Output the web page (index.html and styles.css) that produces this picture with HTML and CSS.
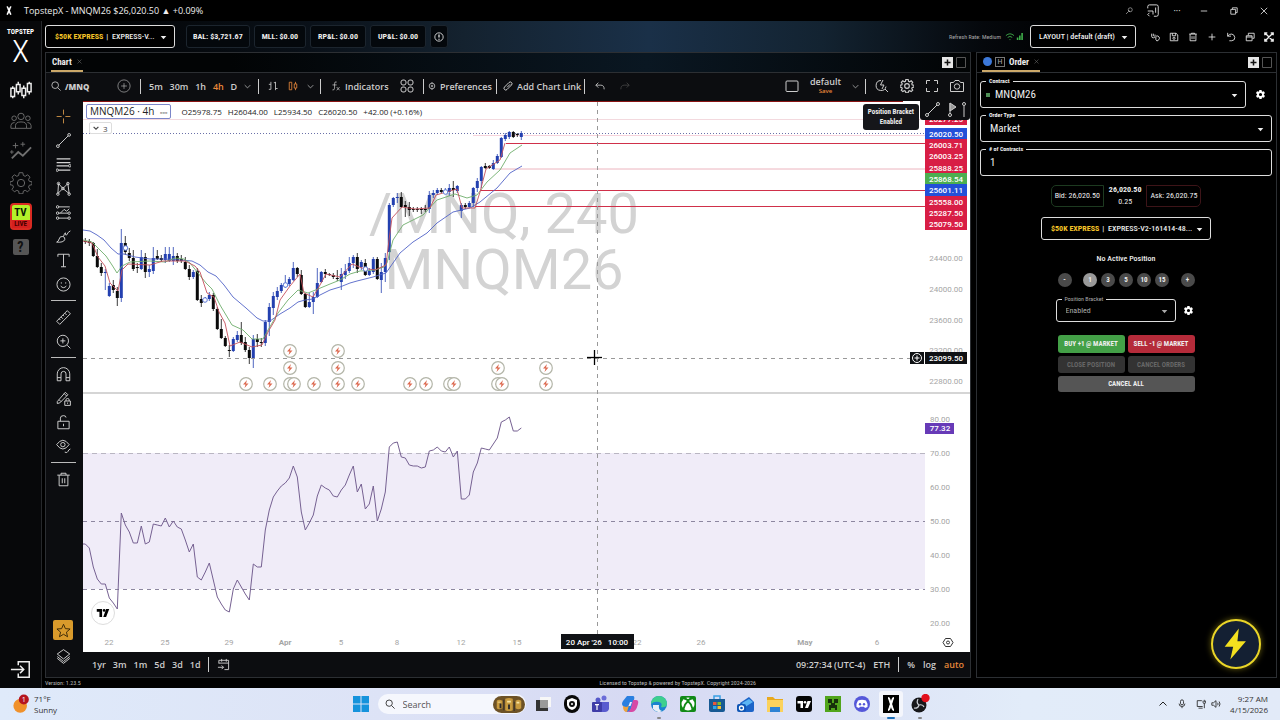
FILE: index.html
```
<!DOCTYPE html>
<html lang="en">
<head>
    <meta charset="UTF-8">
    <meta name="viewport" content="width=device-width, initial-scale=1">
    <title>TopstepX - MNQM26</title>
    <link rel="stylesheet" href="styles.css">
</head>
<body>

    <!-- shared icons -->
    <svg class="sprite" aria-hidden="true">
        <symbol id="i-gear" viewBox="0 0 24 24"><path d="M10 2h4l.6 3 2 .9L19.200 4.200l2.600 2.600-1.600 2.600.8 1.900 3 .7v3l-3 .7-.8 2 1.600 2.500-2.600 2.600-2.600-1.600-2 .8-.6 3h-4l-.6-3-2-.8-2.600 1.600-2.600-2.600 1.600-2.500-.8-2-3-.7v-3l3-.7.8-1.900L2.200 6.800l2.600-2.600 2.600 1.700 2-.9z" transform="translate(0 -1.200)"/><circle cx="12" cy="12" r="4"/></symbol>
        <symbol id="i-cog" viewBox="0 0 24 24"><path fill="currentColor" stroke="none" fill-rule="evenodd" d="M19.400 13a7.500 7.500 0 0 0 0-2l2.100-1.600a.5.5 0 0 0 .1-.7l-2-3.400a.5.5 0 0 0-.6-.2l-2.500 1a7.300 7.300 0 0 0-1.700-1l-.4-2.700a.5.5 0 0 0-.5-.4h-4a.5.5 0 0 0-.5.4L9 5.100a7.700 7.700 0 0 0-1.700 1l-2.500-1a.5.5 0 0 0-.6.200l-2 3.400a.5.5 0 0 0 .1.700L4.500 11a8 8 0 0 0 0 2l-2.100 1.600a.5.5 0 0 0-.1.700l2 3.400c.1.200.4.300.6.200l2.500-1a7.300 7.300 0 0 0 1.700 1l.4 2.700c0 .2.200.4.500.4h4c.2 0 .5-.2.5-.4l.4-2.700a7.700 7.700 0 0 0 1.700-1l2.500 1c.2.100.5 0 .6-.2l2-3.400a.5.5 0 0 0-.1-.7zM12 15.500a3.500 3.500 0 1 1 0-7 3.500 3.500 0 0 1 0 7z"/></symbol>
        <symbol id="i-caret" viewBox="0 0 10 10"><path fill="currentColor" stroke="none" d="M1 3h8L5 7.500z"/></symbol>
        <symbol id="i-chev" viewBox="0 0 10 10"><path d="M1 3l4 4 4-4"/></symbol>
        <symbol id="i-x" viewBox="0 0 10 10"><path d="M1 1l8 8M9 1L1 9"/></symbol>
        <symbol id="i-win" viewBox="0 0 24 11"><path fill="#e6e6e6" stroke="none" d="M0 0h11v11H0z"/><path stroke="#111" stroke-width="1.500" d="M5.500 2.500v6M2.500 5.500h6"/><path stroke="#555" d="M14.500.5h9v10h-9z"/></symbol>
        <symbol id="i-bolt" viewBox="0 0 24 24"><path fill="currentColor" stroke="none" d="M14 1L4 14h6l-2 9 11-13h-6z"/></symbol>
    </svg>

    <div class="titlebar">
        <svg class="app-icon" viewBox="0 0 8 12"><path fill="none" stroke="#fff" stroke-width="2" d="M1 1c2 0 1 2 3 5s1 5 3 5M7 1C5 1 6 3 4 6S3 11 1 11"/></svg>
        <span>TopstepX - MNQM26 $26,020.50 ▲ +0.09%</span>
        <div class="window-buttons">
            <button aria-label="Password"><svg viewBox="0 0 16 16"><circle cx="10.500" cy="5.500" r="4"/><path d="M7.500 8.500L2 14M7 6l3 4"/></svg></button>
            <button aria-label="Side panel"><svg class="big" viewBox="0 0 16 16"><path d="M2 5V3q0-2 2-2h8q2 0 2 2v9q0 2-2 2H9M11 4v6M2 8h6v4M4 14l-2-2 2-2"/></svg></button>
            <button aria-label="More">···</button>
            <button aria-label="Minimize"><svg viewBox="0 0 10 10"><path d="M1 5h8"/></svg></button>
            <button aria-label="Restore"><svg viewBox="0 0 10 10"><path d="M1 3h6v6H1zM3 3V1h6v6H7"/></svg></button>
            <button aria-label="Close"><svg viewBox="0 0 10 10"><use href="#i-x"/></svg></button>
        </div>
    </div>

    <div class="app">
        <nav class="side-nav">
            <div class="logo"><span>TOPSTEP</span><b>X</b></div>
            <a href="#" class="on" aria-label="Trading"><svg viewBox="0 0 24 24"><path stroke-width="1.600" d="M3 8v2m0 9v2M1 10h4v9H1zM9 3v3m0 8v3M7 6h4v8H7zM15 7v3m0 8v3M13 10h4v8h-4zM21 3v2m0 9v3M19 5h4v9h-4z"/></svg></a>
            <a href="#" aria-label="Leaderboard"><svg viewBox="0 0 24 24"><circle cx="12" cy="7" r="3.500"/><circle cx="4.500" cy="9" r="2.500"/><circle cx="19.500" cy="9" r="2.500"/><path d="M6 20v-3q0-4 6-4t6 4v3zM6 20H1v-3q0-3 4-3.500M18 20h5v-3q0-3-4-3.500"/></svg></a>
            <a href="#" aria-label="Insights"><svg viewBox="0 0 24 24"><path stroke-width="2" d="M2 19l7-7 5 4 9-9"/><path d="M6 2v6M3 5h6M14 1v5M11.500 3.500h5M2 10v4M0 12h4"/></svg></a>
            <a href="#" aria-label="Settings"><svg viewBox="0 0 24 24"><use href="#i-gear"/></svg></a>
            <a href="#" class="tv"><b>TV</b><i>LIVE</i></a>
            <a href="#" class="help">?</a>
            <a href="#" class="exit on" aria-label="Log out"><svg viewBox="0 0 24 24"><path stroke-width="1.600" d="M9 8V4h12v17H9v-4M1 12.500h14M11 8.500l4 4-4 4"/></svg></a>
        </nav>

        <div class="main">
            <header class="account-bar">
                <div class="select-box account">
                    <label for="account">$50K EXPRESS</label>
                    <select id="account"><option>|&nbsp; EXPRESS-V...</option></select>
                    <svg class="caret"><use href="#i-caret"/></svg>
                </div>
                <div class="stats">
                    <span class="stat">BAL: $3,721.67</span>
                    <span class="stat">MLL: $0.00</span>
                    <span class="stat">RP&amp;L: $0.00</span>
                    <span class="stat">UP&amp;L: $0.00</span>
                    <button class="stat info" aria-label="Info"><svg viewBox="0 0 12 12"><circle cx="6" cy="6" r="5"/><path stroke-width="1.500" d="M6 3v3.500M6 8v1.200"/></svg></button>
                </div>
                <div class="refresh">
                    <span>Refresh Rate: Medium</span>
                    <svg viewBox="0 0 20 10"><path d="M1 4q4.500-4 9 0M3 6q2.500-2.200 5 0M5.500 8v1"/><path stroke-width="1.800" d="M14 6v3M16.500 4v5M19 1v8"/></svg>
                </div>
                <div class="select-box layout">
                    <select aria-label="Layout"><option>LAYOUT | default (draft)</option></select>
                    <svg class="caret"><use href="#i-caret"/></svg>
                </div>
                <div class="layout-tools">
                    <button aria-label="Link"><svg viewBox="0 0 12 12"><path d="M2 2v3q0 2 2 2t2-2V3M4 2v3M7 5q3-1 4 1t-1 4-3-1V6"/></svg></button>
                    <button aria-label="Save"><svg viewBox="0 0 12 12"><path d="M1.500 1.500h7l2 2v7h-9zM4 1.500v3h4v-3"/><circle cx="6" cy="7.500" r="1.300"/></svg></button>
                    <button aria-label="Delete"><svg viewBox="0 0 12 12"><path d="M1.500 2.500h9M4 2.500v-1h4v1M2.500 2.500v8h7v-8M4.800 5v3.500M7.200 5v3.500"/></svg></button>
                    <button aria-label="Add"><svg viewBox="0 0 12 12"><path d="M6 2v8M2 6h8"/></svg></button>
                    <button aria-label="Reset"><svg viewBox="0 0 12 12"><path d="M2 1v4h4M2 5q2-3 5-2.500t3.500 4T7 10.500H4"/></svg></button>
                    <button aria-label="Windows"><svg viewBox="0 0 12 12"><path d="M1.500 4.500h7v6h-7zM1.500 6h7M4 4V1.500h7v6H9"/></svg></button>
                    <button aria-label="Full screen"><svg viewBox="0 0 12 12"><path stroke-width="1.600" d="M1.500 1.500l9 9M10.500 1.500l-9 9M1 4V1h3M8 1h3v3M11 8v3H8M4 11H1V8"/></svg></button>
                </div>
            </header>

            <div class="panels">
                <section class="panel chart-panel">
                    <div class="tabs">
                        <a href="#" class="tab">Chart <svg><use href="#i-x"/></svg></a>
                        <svg class="win"><use href="#i-win"/></svg>
                    </div>

                    <div class="toolbar">
                        <div class="group symbol">
                            <button><svg viewBox="0 0 12 12"><circle cx="5" cy="5" r="4"/><path d="M8 8l3.500 3.500"/></svg><b>/MNQ</b></button>
                            <button aria-label="Compare"><svg class="lg" viewBox="0 0 24 24"><circle cx="12" cy="12" r="10.500"/><path d="M12 7v10M7 12h10"/></svg></button>
                        </div>
                        <div class="group intervals">
                            <button>5m</button><button>30m</button><button>1h</button><button class="active">4h</button><button>D</button>
                            <button aria-label="More intervals"><svg class="chev"><use href="#i-chev"/></svg></button>
                        </div>
                        <div class="group types">
                            <button aria-label="Bars"><svg viewBox="0 0 12 12"><path d="M1 4h2.500M3.500 1v9M3.500 10H1M9 1v10M9 2H7M9 9h2.500"/></svg></button>
                            <button aria-label="Candles" class="active"><svg viewBox="0 0 12 12"><path d="M1.500 1.500h3v9h-3zM7.500 3.500h3v5h-3zM9 1v2.500M9 8.500V11"/></svg></button>
                            <button aria-label="More types"><svg class="chev"><use href="#i-chev"/></svg></button>
                        </div>
                        <div class="group indicators">
                            <button><svg viewBox="0 0 14 14"><path d="M8 1.500Q5 0 5 4v6q0 3-3 2.500M2 5.500h6M8 8.500l4 4.500M12 8.500L8 13"/></svg>Indicators</button>
                            <button aria-label="Templates"><svg class="lg" viewBox="0 0 14 14"><rect x="1" y="1" width="5" height="5" rx="2"/><rect x="8" y="1" width="5" height="5" rx="2"/><rect x="1" y="8" width="5" height="5" rx="2"/><rect x="8" y="8" width="5" height="5" rx="2"/></svg></button>
                        </div>
                        <div class="group prefs"><button><svg class="sm" viewBox="0 0 10 10"><circle cx="5" cy="5" r="3.500"/><circle cx="5" cy="5" r="1"/><path d="M5 0v1.500M5 8.500V10"/></svg>Preferences</button></div>
                        <div class="group link"><button><svg viewBox="0 0 12 12"><path stroke-width="1.200" d="M5 7.500L8.500 4M4.500 4.500L1.800 7.200a2 2 0 0 0 3 3L7.500 7.500M7.500 7.500l2.700-2.700a2 2 0 0 0-3-3L4.500 4.500"/></svg>Add Chart Link</button></div>
                        <div class="group history">
                            <button aria-label="Undo"><svg viewBox="0 0 12 12"><path d="M4 2L1 5l3 3M1 5h6q4 0 4 5"/></svg></button>
                            <button aria-label="Redo" disabled><svg viewBox="0 0 12 12"><path d="M8 2l3 3-3 3M11 5H5q-4 0-4 5"/></svg></button>
                        </div>
                        <div class="chart-layout">
                            <button aria-label="Layout"><svg class="lg" viewBox="0 0 14 14"><rect x="1" y="2" width="12" height="10.500" rx="1"/></svg></button>
                            <button class="saved">default<small>Save</small></button>
                            <button aria-label="Layouts"><svg class="chev"><use href="#i-chev"/></svg></button>
                        </div>
                        <div class="group view">
                            <button aria-label="Quick search"><svg class="lg" viewBox="0 0 14 14"><path d="M6 1.500a5 5 0 1 0 5 6M10 10l3 3M8 1L5.500 6H9l-2 4"/></svg></button>
                            <button aria-label="Chart settings"><svg class="lg gear" viewBox="0 0 24 24"><use href="#i-gear"/></svg></button>
                            <button aria-label="Full screen"><svg class="lg" viewBox="0 0 14 14"><path d="M1.500 5V1.500H5M9 1.500h3.500V5M12.500 9v3.500H9M5 12.500H1.500V9"/></svg></button>
                            <button aria-label="Snapshot"><svg class="lg" viewBox="0 0 14 14"><path d="M.5 3.500h3l1.500-2h4l1.500 2h3v9H.5z"/><circle cx="7" cy="7.500" r="2.700"/></svg></button>
                        </div>
                    </div>

                    <div class="chart-body">
                        <div class="draw-tools">
                            <button class="active" aria-label="Cross"><svg viewBox="0 0 24 24"><path d="M12 1v8M12 15v8M1 12h8M15 12h8"/></svg></button>
                            <button aria-label="Trend line"><svg viewBox="0 0 24 24"><circle cx="3" cy="21" r="2.200"/><circle cx="21" cy="3" r="2.200"/><path d="M4.500 19.500l15-15"/></svg></button>
                            <button aria-label="Fib"><svg viewBox="0 0 24 24"><path stroke-width="2" d="M1 3h22M1 9h22M1 14h19M4 21h19"/><circle cx="22" cy="14" r="2"/><circle cx="2" cy="21" r="2"/></svg></button>
                            <button aria-label="Patterns"><svg viewBox="0 0 24 24"><path d="M4 4l-1 16 8-8 8-8 2 16-10-8z"/><circle cx="4" cy="4" r="2"/><circle cx="19" cy="4" r="2"/><circle cx="3" cy="21" r="2"/><circle cx="21" cy="21" r="2"/><circle cx="11" cy="12" r="2"/></svg></button>
                            <button aria-label="Forecast"><svg viewBox="0 0 24 24"><path d="M4 3h18M4 13h15M4 21h15M7 13l6-6 4 3 4-4"/><circle cx="2.500" cy="3" r="2"/><circle cx="2.500" cy="13" r="2"/><circle cx="21" cy="13" r="2"/><circle cx="2.500" cy="21" r="2"/><circle cx="21" cy="21" r="2"/></svg></button>
                            <button aria-label="Brush"><svg viewBox="0 0 24 24"><path d="M1 21q3-1 4-5 1-5 6-4 4 1 3 5-2 5-13 4zM12 12q1-4 3-6v3q2 2 3-1t5-5"/></svg></button>
                            <button aria-label="Text"><svg viewBox="0 0 24 24"><path d="M3 6V2h18v4M12 2v20M8 22h8"/></svg></button>
                            <button aria-label="Emoji"><svg viewBox="0 0 24 24"><circle cx="12" cy="12" r="10.500"/><path d="M7.500 14.500q4.500 5 9 0M8.500 8.500v2M15.500 8.500v2"/></svg></button>
                            <hr>
                            <button aria-label="Measure"><svg viewBox="0 0 24 24"><path d="M1 18L18 1l5 5L6 23zM5 14l2 2M8 11l3 3M11 8l2 2M14 5l3 3"/></svg></button>
                            <button aria-label="Zoom in"><svg viewBox="0 0 24 24"><circle cx="11" cy="11" r="9"/><path d="M11 7v8M7 11h8M18 18l5 5"/></svg></button>
                            <hr>
                            <button aria-label="Magnet"><svg viewBox="0 0 24 24"><path d="M2 22V11a10 10 0 0 1 20 0v11h-6V11a4 4 0 0 0-8 0v11zM2 17h6M16 17h6"/></svg></button>
                            <button aria-label="Stay in drawing mode"><svg viewBox="0 0 24 24"><path d="M2 17L15 2l4 4L6 19l-4 1zM5 14l3 3M13 4l4 4M14 16h9v7h-9zM16 16v-2q0-2 2.500-2t2.500 2v2M18.500 18.500v2"/></svg></button>
                            <button aria-label="Lock"><svg viewBox="0 0 24 24"><path d="M3 10h18v12H3zM7 10V5q0-4 5-4 4 0 4 3M12 14v4"/></svg></button>
                            <button aria-label="Hide"><svg viewBox="0 0 24 24"><path d="M1 9q10-14 20 0-10 14-20 0z"/><circle cx="11" cy="9" r="3.500"/><path d="M14 21q4 2 5-1t4-4"/></svg></button>
                            <hr>
                            <button aria-label="Remove"><svg viewBox="0 0 24 24"><path d="M2 5h20M8 5V2h8v3M5 5v17h14V5M10 10v8M14 10v8"/></svg></button>
                            <button class="star" aria-label="Favorites"><svg viewBox="0 0 24 24"><path d="M12 2l3 7 7.500.6-5.800 5 1.800 7.400-6.500-4-6.500 4 1.800-7.400-5.800-5L9 9z"/></svg></button>
                            <button class="layers" aria-label="Object tree"><svg viewBox="0 0 24 24"><path d="M12 1l10 7-10 8L2 8zM2 12l10 8 10-8M2 15l10 8 10-8"/></svg></button>
                        </div>

                        <div class="chart-area">
                            <svg id="chart" viewBox="83 101 887 551" role="img" aria-label="MNQM26 4 hour chart with RSI"></svg>
                            <div class="legend">
                                <span class="legend-symbol">MNQM26 · 4h <i>▫▫▫</i></span>
                                <span class="ohlc"><span>O25978.75</span><span>H26044.00</span><span>L25934.50</span><span>C26020.50</span><span>+42.00 (+0.16%)</span></span>
                            </div>
                            <button class="collapse"><svg class="chev"><use href="#i-chev"/></svg>3</button>
                            <div class="favorites">
                                <svg viewBox="0 0 44 18"><circle cx="4" cy="14" r="1.500"/><circle cx="15" cy="3" r="1.500"/><path d="M5 13L14 4M27 2v11M41 5v11"/><path fill="#999" d="M27 2l6 4-6 4z"/><circle cx="27" cy="14" r="1.500"/><circle cx="41" cy="3" r="1.500"/></svg>
                            </div>
                            <div class="tooltip">Position Bracket<br><span>Enabled</span></div>
                            <span class="tv-mark"><svg viewBox="0 0 14 9"><path d="M0 0h6v9H3V3H0zM10.500 0H14l-3.500 9H7.300z"/><circle cx="8.300" cy="1.600" r="1.500"/></svg></span>
                        </div>

                        <div class="range-bar">
                            <button>1yr</button><button>3m</button><button>1m</button><button>5d</button><button>3d</button><button>1d</button>
                            <button class="goto" aria-label="Go to date"><svg viewBox="0 0 14 14"><path d="M2 6V2.500h10.500v10H8M2 5.500h10.500M5 1v3M10 1v3M1 10h6M5 8l2 2-2 2"/></svg></button>
                            <span class="clock">09:27:34 (UTC-4)</span>
                            <button>ETH</button>
                            <button class="percent">%</button>
                            <button>log</button>
                            <button class="active">auto</button>
                        </div>
                    </div>
                </section>

                <section class="panel order-panel">
                    <div class="tabs">
                        <a href="#" class="tab"><i class="dot"></i><i class="hbox">H</i>Order <svg><use href="#i-x"/></svg></a>
                        <svg class="win"><use href="#i-win"/></svg>
                    </div>
                    <form class="order-form">
                        <div class="row">
                            <div class="field">
                                <label for="contract">Contract</label>
                                <i class="status"></i>
                                <select id="contract"><option>MNQM26</option></select>
                                <svg class="caret"><use href="#i-caret"/></svg>
                            </div>
                            <button type="button" class="cog" aria-label="Contract settings"><svg><use href="#i-cog"/></svg></button>
                        </div>
                        <div class="field">
                            <label for="orderType">Order Type</label>
                            <select id="orderType"><option>Market</option></select>
                            <svg class="caret"><use href="#i-caret"/></svg>
                        </div>
                        <div class="field">
                            <label for="contracts"># of Contracts</label>
                            <input type="text" id="contracts" value="1">
                        </div>

                        <div class="quote">
                            <span class="bid">Bid: 26,020.50</span>
                            <span class="last"><b>26,020.50</b>0.25</span>
                            <span class="ask">Ask: 26,020.75</span>
                        </div>

                        <div class="select-box order-account">
                            <label for="orderAccount">$50K EXPRESS</label>
                            <select id="orderAccount"><option>|&nbsp; EXPRESS-V2-161414-48...</option></select>
                            <svg class="caret"><use href="#i-caret"/></svg>
                        </div>

                        <p class="position">No Active Position</p>
                        <div class="sizes">
                            <button type="button">-</button>
                            <div>
                                <button type="button" class="picked">1</button><button type="button">3</button><button type="button">5</button><button type="button">10</button><button type="button">15</button>
                            </div>
                            <button type="button">+</button>
                        </div>
                        <div class="row bracket">
                            <div class="field">
                                <label for="bracket">Position Bracket</label>
                                <select id="bracket"><option>Enabled</option></select>
                                <svg class="caret"><use href="#i-caret"/></svg>
                            </div>
                            <button type="button" class="cog" aria-label="Bracket settings"><svg><use href="#i-cog"/></svg></button>
                        </div>
                        <div class="actions">
                            <button type="button" class="buy">BUY +1 @ MARKET</button>
                            <button type="button" class="sell">SELL -1 @ MARKET</button>
                            <button type="button" disabled>CLOSE POSITION</button>
                            <button type="button" disabled>CANCEL ORDERS</button>
                            <button type="button" class="cancel-all">CANCEL ALL</button>
                        </div>
                    </form>
                    <button class="fab" aria-label="Quick actions"><svg viewBox="0 0 24 24"><use href="#i-bolt"/></svg></button>
                </section>
            </div>

            <footer class="app-footer">
                <span>Version: 1.23.5</span>
                <span>Licensed to Topstep &amp; powered by TopstepX. Copyright 2024-2026</span>
            </footer>
        </div>
    </div>

    <div class="taskbar">
        <div class="weather">
            <svg viewBox="0 0 22 22"><circle cx="9" cy="13" r="7.500" fill="#f0912a"/><circle cx="13" cy="6" r="5.500" fill="#b5151f"/><text x="13" y="9" fill="#fff" font-size="8" text-anchor="middle">1</text></svg>
            <span>71°F<br>Sunny</span>
        </div>
        <div class="apps">
            <a href="#" aria-label="Start"><svg viewBox="0 0 20 20"><path fill="#1593dc" d="M2 2h7.500v7.500H2zM10.500 2H18v7.500h-7.500zM2 10.500h7.500V18H2zM10.500 10.500H18V18h-7.500z"/></svg></a>
            <label class="search">
                <svg viewBox="0 0 12 12"><circle cx="5" cy="5" r="3.800"/><path d="M8 8l3.500 3.500"/></svg>
                <input type="text" placeholder="Search" aria-label="Search">
                <svg class="promo" viewBox="0 0 34 18"><rect width="34" height="18" rx="9" fill="#6d5226"/><path fill="#c79a3e" d="M4 5q2-2 6 0v8q-4 2-6 0zM13 3q4-2 8 0v12q-4 2-8 0zM24 5q3-2 6 0v8q-3 2-6 0z"/><path fill="#2e2b2a" d="M11 4h1v11h-1zM22 6h1v10h-1zM7 8h2v5H7zM16 9h2v5h-2z"/><path fill="#f6e3a0" d="M15 5h4v2h-4zM25 6h3v2h-3zM5 6h3v1H5z"/></svg>
            </label>
            <a href="#" aria-label="Task view"><svg viewBox="0 0 20 20"><path fill="#f7f7f7" d="M7 3h11v10H7z"/><path fill="#333" d="M3 6h4v8h8v3H3z"/><path fill="#9a9a9a" d="M7 6h8v8H7z"/></svg></a>
            <a href="#" aria-label="Security"><svg viewBox="0 0 20 20"><rect x="2" y="1" width="16" height="18" rx="8" fill="#090909"/><path fill="#fff" d="M10 4l5 2v5q-1 4-5 5-4-1-5-5V6z"/><circle cx="10" cy="10" r="3" fill="#111"/><circle cx="10" cy="10" r="1" fill="#fff"/></svg></a>
            <a href="#" aria-label="Teams"><svg viewBox="0 0 20 20"><circle cx="13" cy="4" r="2.500" fill="#6b6cd8"/><circle cx="7" cy="6" r="2.500" fill="#5558c9"/><path fill="#5a5ccf" d="M9 8h9v7q-1 3-4 3H9z"/><rect x="1" y="8" width="10" height="10" rx="1" fill="#3f3da8"/><path fill="#fff" d="M4 10h4v1.200H6.600V16H5.400v-4.800H4z"/></svg></a>
            <a href="#" aria-label="Copilot"><svg viewBox="0 0 20 20"><path fill="#2a7fe0" d="M7 2h6q2 0 1 4l-3 9q-1 3-4 3-3-1-2-4L3 12q-2-2 0-5z"/><path fill="#f0a23c" d="M3 12l3 1q2 0 3-2l-2 7q-4 0-4-6z"/><path fill="#d64aa5" d="M13 6h3q3 0 2 4-2 8-6 8H7q3-1 4-4z"/><path fill="#eef" d="M10 8h2l-1.500 4h-2z"/></svg></a>
            <a href="#" class="run" aria-label="Edge"><svg viewBox="0 0 20 20"><circle cx="10" cy="10" r="8" fill="#1b83cf"/><path fill="#3ecf8e" d="M10 2a8 8 0 0 1 8 8q-1 4-6 3 2-4-2-5-5-1-8 2 1-8 8-8z"/><path fill="#e8eef6" d="M4 11h6q-1 5 3 6-4 3-9-2z"/></svg></a>
            <a href="#" aria-label="Xbox"><svg viewBox="0 0 20 20"><rect x="2" y="2" width="16" height="16" rx="2" fill="#118a17"/><circle cx="10" cy="10" r="6.500" fill="#fff"/><path fill="none" stroke="#118a17" stroke-width="1.800" d="M5.500 15q1-5 4.500-8 3.500 3 4.500 8M6 4.500q2 0 4 2 2-2 4-2"/></svg></a>
            <a href="#" aria-label="Store"><svg viewBox="0 0 20 20"><path fill="#175a94" d="M2 5h16v11q0 2-2 2H4q-2 0-2-2z"/><path fill="none" stroke="#3aa0e4" stroke-width="1.500" d="M7 5V2h6v3"/><path fill="#e8573b" d="M6 8h3.500v3H6z"/><path fill="#7fba2c" d="M10.500 8H14v3h-3.500z"/><path fill="#2fa5e8" d="M6 12h3.500v3H6z"/><path fill="#f5c02d" d="M10.500 12H14v3h-3.500z"/></svg></a>
            <a href="#" aria-label="Outlook"><svg viewBox="0 0 20 20"><path fill="#1b64c8" d="M4 9l9-6 5 5v8q0 2-2 2H6z"/><path fill="#5bb5f4" d="M6 9l7-4 4 3-8 5z"/><rect x="1" y="10" width="9" height="8" rx="2" fill="#0f56b5"/><circle cx="5.500" cy="14" r="2" fill="none" stroke="#fff" stroke-width="1.300"/></svg></a>
            <a href="#" aria-label="Explorer"><svg viewBox="0 0 20 20"><path fill="#e8a91f" d="M2 3h6l2 2h8v5H2z"/><path fill="#fbd25c" d="M2 6h16v12H2z"/><path fill="#2d83d4" d="M5 13h10v5H5z"/></svg></a>
            <a href="#" aria-label="TradingView"><svg viewBox="0 0 20 20"><rect x="2" y="2" width="16" height="16" rx="3" fill="#050505"/><path fill="#fff" d="M3.500 7H9v7H6.500V9.500h-3zM13.500 7H17l-3 7h-3z"/><circle cx="11" cy="8.200" r="1.300" fill="#fff"/></svg></a>
            <a href="#" aria-label="Minecraft"><svg viewBox="0 0 20 20"><path fill="#51a51c" d="M2 2h16v16H2z"/><path fill="#17300b" d="M5 5h4v4H5zM11 5h4v4h-4zM8 9h4v2h2v5h-2v-2H8v2H6v-5h2z"/></svg></a>
            <a href="#" aria-label="Discord"><svg viewBox="0 0 20 20"><circle cx="10" cy="10" r="8" fill="#5558d9"/><path fill="#fff" d="M6 6.500q4-1.500 8 0 2 3 1.500 6.500l-2.500 1-1-1.200H8L7 14l-2.500-1Q4 9.500 6 6.500z"/><circle cx="8" cy="10.300" r="1.200" fill="#5558d9"/><circle cx="12" cy="10.300" r="1.200" fill="#5558d9"/></svg></a>
            <a href="#" class="current" aria-label="TopstepX"><svg viewBox="0 0 20 20"><path fill="#000" d="M2 1h16v18H2z"/><path fill="none" stroke="#fff" stroke-width="2" d="M7 4c2 0 1.500 3 3 6s1 6 3 6M13 4c-2 0-1.500 3-3 6s-1 6-3 6"/></svg></a>
            <a href="#" class="run" aria-label="OBS"><svg viewBox="0 0 20 20"><circle cx="9" cy="11" r="7.500" fill="#17171a"/><path fill="none" stroke="#c9ccd2" stroke-width="1.200" d="M9 11q-3-2-1-6M9 11q4-1 5 2M9 11q-1 4-5 3"/><circle cx="15.500" cy="4" r="4.200" fill="#e20f1c"/></svg></a>
        </div>
        <div class="tray">
            <svg viewBox="0 0 10 10"><path d="M1.500 6.500L5 3l3.500 3.500"/></svg>
            <svg class="mic" viewBox="0 0 12 12"><rect x="4.200" y="1" width="3.600" height="6" rx="1.800"/><path d="M2.500 5.500q0 3.500 3.500 3.500t3.500-3.500M6 9v2"/></svg>
            <svg viewBox="0 0 12 12"><path d="M7 2H1.500v7H8M3 11h5M10 1v3M8.500 2v2q0 1.500 1.500 1.500T11.500 4V2M10 5.500V11"/></svg>
            <svg viewBox="0 0 12 12"><path d="M1 4.500h2L6 2v8L3 7.500H1zM8 4.500q1 1.500 0 3M9.800 3q2 3 0 6"/></svg>
            <span>9:27 AM<br>4/15/2026</span>
        </div>
    </div>

    <script src="chart.js"></script>
</body>
</html>
```
FILE: styles.css
```
* {
    box-sizing: border-box;
}

body {
    margin: 0;
    height: 100vh;
    display: flex;
    flex-direction: column;
    background-color: #000;
    color: #eee;
    font-family: "Roboto Condensed", Roboto, sans-serif;
    font-size: 8px;
    overflow: hidden;
}

svg {
    display: block;
    fill: none;
    stroke: currentColor;
    flex: none;
}

button, select, input {
    font: inherit;
    color: inherit;
    background: none;
    border: none;
    padding: 0;
    margin: 0;
    appearance: none;
}

button {
    display: flex;
    align-items: center;
    justify-content: center;
    gap: 4px;
    white-space: nowrap;
    cursor: pointer;
}

a {
    color: inherit;
    text-decoration: none;
}

i {
    font-style: normal;
}

.sprite {
    position: absolute;
    width: 0;
    height: 0;
}

/* title bar */
.titlebar {
    display: flex;
    align-items: center;
    gap: 12px;
    height: 21px;
    padding: 0 1px 0 6px;
    font-family: "Open Sans", sans-serif;
    font-size: 9px;
}

.app-icon {
    width: 6px;
    height: 9px;
}

.window-buttons {
    display: flex;
    align-items: center;
    margin-left: auto;
}

.window-buttons button {
    width: 30px;
}

.window-buttons button:nth-child(-n+3) {
    width: 24px;
}

.window-buttons svg {
    width: 8px;
    height: 8px;
}

.window-buttons .big {
    width: 14px;
    height: 14px;
}

/* layout */
.app {
    flex: 1;
    display: flex;
    min-height: 0;
}

.side-nav {
    width: 42px;
    display: flex;
    flex-direction: column;
    align-items: center;
    gap: 9px;
    padding: 4px 0 8px;
    background-color: #07080a;
    border-right: 1px solid #26282b;
    color: #707070;
}

.side-nav svg {
    width: 22px;
    height: 22px;
}

.side-nav .on {
    color: #eee;
}

.logo {
    display: flex;
    flex-direction: column;
    align-items: center;
    height: 45px;
    color: #fff;
    font-size: 7px;
    font-weight: bold;
    line-height: 14px;
}

.logo b {
    font-size: 32px;
    font-weight: 300;
    line-height: 24px;
}

.tv {
    width: 22px;
    height: 27px;
    border: 2px solid #d92b22;
    border-radius: 4px;
    background-color: #b3f02a;
    color: #0b1a05;
    display: flex;
    flex-direction: column;
    justify-content: space-between;
    text-align: center;
    line-height: 15px;
    font-size: 11px;
}

.tv i {
    background-color: #d61f1f;
    color: #400;
    font-size: 7px;
    font-weight: bold;
    line-height: 8px;
}

.help {
    width: 16px;
    height: 16px;
    border-radius: 2px;
    background-color: #555;
    color: #111;
    font-size: 14px;
    font-weight: bold;
    line-height: 16px;
    text-align: center;
}

.exit {
    margin-top: auto;
}

.main {
    flex: 1;
    min-width: 0;
    display: flex;
    flex-direction: column;
}

.account-bar {
    display: flex;
    align-items: center;
    height: 31px;
    padding: 0 2px 0 3px;
    background: linear-gradient(90deg, #000 0%, #0a1119 22%, #14222f 34%, #1a3048 49%, #132331 63%, #05080c 76%, #000 84%);
}

.select-box {
    position: relative;
    display: flex;
    align-items: center;
    gap: 3px;
    height: 23px;
    padding: 0 18px 0 9px;
    border: 1px solid #ddd;
    border-radius: 3px;
    background-color: #000;
}

.select-box select {
    flex: 1;
    min-width: 0;
    font-weight: 500;
}

.select-box label {
    color: #f5c528;
    font-weight: bold;
    white-space: nowrap;
}

.caret {
    position: absolute;
    right: 7px;
    top: 50%;
    width: 7px;
    height: 7px;
    margin-top: -3px;
    pointer-events: none;
}

.account {
    width: 130px;
}

.stats {
    display: flex;
    gap: 4px;
    margin-left: 11px;
}

.stat {
    height: 23px;
    padding: 0 7px;
    border: 1px solid #1c252e;
    border-radius: 3px;
    background-color: #04080c;
    font-weight: bold;
    line-height: 21px;
    white-space: nowrap;
}

.stat:first-child {
    padding: 0 6px;
}

.info {
    padding: 0 3px;
}

.info svg, .layout-tools svg {
    width: 10px;
    height: 10px;
}

.refresh {
    display: flex;
    align-items: center;
    gap: 3px;
    margin-left: auto;
    font-size: 6px;
    color: #aaa;
}

.refresh svg {
    width: 20px;
    height: 9px;
    color: #3fae4a;
}

.layout {
    width: 106px;
    margin: 0 10px 0 6px;
    padding: 0 12px 0 8px;
}

.layout-tools {
    display: flex;
    gap: 1px;
}

.layout-tools button {
    width: 18px;
}

.panels {
    flex: 1;
    min-height: 0;
    display: flex;
    gap: 5px;
    padding: 0 3px;
}

.panel {
    display: flex;
    flex-direction: column;
    border: 1px solid #2c2f33;
}

.chart-panel {
    flex: 1;
    min-width: 0;
    background-color: #0c0d10;
}

.order-panel {
    position: relative;
    width: 301px;
    background-color: #000;
}

.tabs {
    display: flex;
    align-items: center;
    justify-content: space-between;
    height: 20px;
    padding: 0 4px 0 5px;
    border-bottom: 1px solid #2c2f33;
    background: linear-gradient(90deg, #020405 20%, #0a1722 65%, #020405);
}

.order-panel .tabs {
    background: #000;
}

.tab {
    display: flex;
    align-items: center;
    gap: 3px;
    height: 19px;
    padding: 0 1px;
    border-bottom: 2px solid #cba869;
    font-size: 9px;
    font-weight: bold;
}

.tab svg {
    width: 5px;
    height: 5px;
    margin-left: 2px;
    color: #777;
}

.win {
    width: 24px;
    height: 11px;
}

.dot {
    width: 9px;
    height: 9px;
    border-radius: 50%;
    background-color: #3c78d8;
}

.hbox {
    width: 10px;
    height: 10px;
    margin-right: 1px;
    border: 1px solid #777;
    color: #aaa;
    font-size: 8px;
    font-weight: normal;
    line-height: 8px;
    text-align: center;
}

/* chart toolbar */
.toolbar {
    display: flex;
    align-items: center;
    height: 28px;
    padding-bottom: 2px;
    font-family: "Open Sans", sans-serif;
    font-size: 9px;
    font-weight: 600;
    color: #ccc;
}

.group {
    display: flex;
    align-items: center;
    justify-content: space-between;
    height: 15px;
    border-left: 1px solid #ccc;
}

.toolbar svg {
    width: 10px;
    height: 10px;
}

.toolbar .lg {
    width: 14px;
    height: 14px;
}

.toolbar .gear {
    stroke-width: 2;
}

.toolbar .sm {
    width: 8px;
    height: 8px;
}

.toolbar .chev {
    width: 7px;
    height: 7px;
}

.active {
    color: #e8883a;
}

.symbol {
    width: 94px;
    padding: 0 9px 0 5px;
    border-left: none;
}

.symbol b {
    font-size: 8px;
}

.intervals {
    width: 118px;
    padding: 0 7px 0 8px;
}

.types {
    width: 62px;
    padding: 0 6px 0 9px;
}

.indicators {
    width: 103px;
    padding: 0 9px 0 10px;
}

.prefs {
    width: 73px;
    padding-left: 4px;
}

.link {
    width: 88px;
    padding-left: 6px;
}

.history {
    padding-left: 10px;
    gap: 15px;
}

.history :disabled {
    color: #444;
}

.chart-layout {
    display: flex;
    align-items: center;
    gap: 11px;
    margin-left: auto;
    margin-right: 6px;
}

.saved {
    flex-direction: column;
    gap: 0;
    line-height: 10px;
}

.saved small {
    font-size: 6px;
    line-height: 8px;
    color: #e8883a;
}

.view {
    gap: 11px;
    padding: 0 6px 0 9px;
}

/* chart */
.chart-body {
    flex: 1;
    min-height: 0;
    display: grid;
    grid-template-columns: 37px 1fr;
    grid-template-rows: 1fr 25px;
}

.draw-tools {
    grid-row: 1 / 3;
    display: flex;
    flex-direction: column;
    align-items: center;
    padding: 3px 3px 9px 0;
    color: #d4d4d4;
}

.draw-tools button {
    height: 24px;
}

.draw-tools svg {
    width: 15px;
    height: 15px;
    stroke-width: 1.5;
}

.draw-tools hr {
    width: 25px;
    height: 1px;
    margin: 4px 0;
    border: none;
    background-color: #bbb;
}

.draw-tools .active {
    color: #c98f45;
}

.draw-tools .star {
    width: 20px;
    height: 20px;
    margin-top: auto;
    margin-bottom: 4px;
    border-radius: 2px;
    background-color: #d99a2b;
    color: #3a2806;
}

.chart-area {
    position: relative;
    min-height: 0;
    background-color: #fff;
}

#chart {
    width: 100%;
    height: 100%;
    stroke: none;
    font-family: Roboto, sans-serif;
}

.legend {
    position: absolute;
    top: 3px;
    left: 3px;
    display: flex;
    align-items: center;
    gap: 10px;
    color: #222;
    font-family: "Open Sans", sans-serif;
    font-size: 8px;
}

.legend-symbol {
    height: 15px;
    padding: 0 3px;
    border: 1px solid #7b86c9;
    border-radius: 2px;
    font-size: 10px;
    line-height: 13px;
}

.legend-symbol i {
    margin-left: 3px;
    font-size: 7px;
}

.ohlc {
    display: flex;
    gap: 6px;
}

.collapse {
    position: absolute;
    top: 21px;
    left: 6px;
    height: 12px;
    padding: 0 3px;
    border: 1px solid #ddd;
    border-radius: 2px;
    background-color: #fff;
    color: #444;
    font-family: "Open Sans", sans-serif;
}

.collapse svg {
    width: 6px;
    height: 6px;
    stroke-width: 2;
}

.favorites {
    position: absolute;
    top: 0;
    right: 0;
    padding: 0 3px 1px;
    border-radius: 0 0 3px 3px;
    background-color: #0c0d10;
    color: #ccc;
}

.favorites svg {
    width: 44px;
    height: 18px;
}

.tooltip {
    position: absolute;
    top: 3px;
    right: 51px;
    padding: 3px 5px;
    border-radius: 3px;
    background-color: #15161a;
    color: #eee;
    font-size: 7px;
    font-weight: bold;
    line-height: 10px;
    text-align: center;
}

.tv-mark {
    position: absolute;
    left: 8px;
    bottom: 27px;
    padding: 7px 4px;
    border: 1px solid #ddd;
    border-radius: 50%;
    background-color: #fff;
}

.tv-mark svg {
    width: 14px;
    height: 8px;
    fill: #000;
    stroke: none;
}

.range-bar {
    display: flex;
    align-items: center;
    gap: 8px;
    padding: 0 6px 0 9px;
    font-family: "Open Sans", sans-serif;
    font-size: 9px;
    font-weight: 600;
    color: #ccc;
}

.range-bar button:nth-child(-n+6) {
    margin-right: -1px;
}

.range-bar .active {
    color: #e8883a;
}

.goto, .percent {
    height: 15px;
    padding-left: 8px;
    border-left: 1px solid #ccc;
}

.goto svg {
    width: 13px;
    height: 13px;
}

.clock {
    margin-left: auto;
}

/* order panel */
.order-form {
    display: flex;
    flex-direction: column;
    align-items: center;
    padding: 8px 4px 0 3px;
}

.row {
    display: flex;
    align-items: center;
    width: 100%;
}

.field {
    position: relative;
    display: flex;
    align-items: center;
    width: 100%;
    height: 27px;
    padding-left: 9px;
    margin-bottom: 7px;
    border: 1px solid #ddd;
    border-radius: 3px;
    font-size: 11px;
}

.field label {
    position: absolute;
    top: -5px;
    left: 5px;
    padding: 0 3px;
    background-color: #000;
    font-size: 6px;
    font-weight: bold;
    line-height: 8px;
}

.field select, .field input {
    flex: 1;
    min-width: 0;
    height: 24px;
    font-size: 11px;
}

.row .field {
    flex: 1;
}

.status {
    width: 4px;
    height: 4px;
    margin: 0 5px 0 -4px;
    background-color: #4f8f56;
}

.cog {
    width: 26px;
    padding-left: 2px;
    margin-bottom: 7px;
    color: #fff;
}

.cog svg {
    width: 11px;
    height: 11px;
}

.quote {
    display: flex;
    align-items: center;
    gap: 5px;
    margin-top: 1px;
    line-height: 12px;
    text-align: center;
}

.bid, .ask {
    padding: 4px 3px;
    border: 1px solid #1d3a20;
    border-radius: 5px 0 0 5px;
    white-space: nowrap;
}

.ask {
    border-color: #3d1418;
    border-radius: 0 5px 5px 0;
}

.last b {
    display: block;
}

.order-account {
    width: 170px;
    margin-top: 9px;
}

.position {
    margin: 13px 0 8px;
    font-weight: 500;
    line-height: 12px;
}

.sizes {
    display: flex;
    justify-content: space-between;
    width: 137px;
}

.sizes div {
    display: flex;
    gap: 4px;
}

.sizes button {
    width: 14px;
    height: 14px;
    border-radius: 50%;
    background-color: #4a4a4a;
    font-size: 7px;
    font-weight: bold;
}

.sizes .picked {
    background-color: #999;
}

.bracket {
    width: 141px;
    margin-top: 12px;
}

.bracket .field {
    height: 23px;
    margin-bottom: 13px;
    color: #aaa;
}

.bracket select {
    height: 20px;
    font-size: 8px;
}

.bracket .field label {
    font-weight: normal;
}

.bracket .cog {
    width: 21px;
    padding-left: 4px;
    margin-bottom: 13px;
}

.actions {
    display: grid;
    grid-template-columns: 1fr 1fr;
    gap: 3px;
    width: 137px;
}

.actions button {
    height: 17px;
    border-radius: 3px;
    background-color: #333;
    font-size: 7px;
    font-weight: bold;
}

.actions :disabled {
    color: #666;
}

.actions .buy {
    height: 18px;
    background-color: #43a047;
}

.actions .sell {
    height: 18px;
    background-color: #b52b3a;
}

.actions .cancel-all {
    grid-column: 1 / 3;
    height: 16px;
    background-color: #555;
}

.fab {
    position: absolute;
    right: 15px;
    bottom: 8px;
    width: 50px;
    height: 50px;
    border: 2px solid #e9d528;
    border-radius: 50%;
    background-color: #142033;
    color: #f3e01f;
    box-shadow: 0 0 6px #6b6110;
}

.fab svg {
    width: 34px;
    height: 34px;
}

.app-footer {
    display: grid;
    grid-template-columns: 9fr 11fr;
    height: 10px;
    padding: 0 3px;
    color: #bbb;
    font-size: 6px;
    line-height: 9px;
}

/* windows taskbar */
.taskbar {
    display: grid;
    grid-template-columns: 1fr auto 1fr;
    align-items: center;
    height: 32px;
    padding: 0 12px;
    background: linear-gradient(90deg, #dfeafa, #dde3f6 30%, #d6d9f3 50%, #e2ecf9 80%, #e2eaf8);
    color: #333;
    font-family: "Open Sans", sans-serif;
    font-size: 8px;
    line-height: 11px;
}

.taskbar svg {
    stroke: none;
}

.weather, .apps, .tray {
    display: flex;
    align-items: center;
}

.weather svg {
    width: 20px;
    height: 20px;
    margin-right: 2px;
}

.apps {
    gap: 5px;
}

.apps a {
    position: relative;
    width: 24px;
    height: 26px;
    padding: 3px 2px;
    border-radius: 3px;
}

.apps a svg {
    width: 20px;
    height: 20px;
}

.apps .current {
    background-color: #f4f6fc;
}

.run::after, .current::after {
    content: "";
    position: absolute;
    left: 10px;
    bottom: -2px;
    width: 4px;
    height: 2px;
    border-radius: 1px;
    background-color: #888;
}

.current::after {
    left: 8px;
    width: 8px;
    background-color: #1c6fb8;
}

.apps .search {
    display: flex;
    align-items: center;
    gap: 8px;
    width: 148px;
    height: 20px;
    padding: 0 1px 0 7px;
    border-radius: 10px;
    background-color: #f5f7fd;
}

.search svg, .tray svg {
    width: 10px;
    height: 10px;
    stroke: #222;
}

.search input {
    flex: 1;
    min-width: 0;
    font-size: 9px;
}

.search input::placeholder {
    color: #555;
}

.search .promo {
    width: 32px;
    height: 17px;
    stroke: none;
}

.tray {
    justify-content: flex-end;
    gap: 9px;
    text-align: right;
}

.tray svg:nth-child(3) {
    margin-right: -4px;
}
```
FILE: chart.js
```
// price candles, one per 4px: high, body top, body bottom, low, u = up / d = down
const candles = `
238 241 242 244 d|239 241 243 246 d|242 243 256 257 d|249 256 267 268 d|263 267 273 276 d
269 272 273 290 u|283 286 296 297 u|280 285 290 293 d|287 291 298 306 d|229 243 298 302 u
236 243 252 255 d|248 253 258 261 d|250 258 269 271 d|263 267 268 273 d|250 257 269 270 u
253 257 272 278 d|265 269 272 277 u|247 258 271 274 u|250 256 259 260 d|255 258 260 262 d
247 254 260 263 u|247 254 261 262 u|247 256 261 265 u|253 256 261 263 d|255 259 261 263 d
257 262 269 270 d|265 269 277 280 d|270 272 277 279 u|268 271 300 301 d|295 299 303 307 d
297 299 300 302 d|292 295 299 301 u|293 295 309 311 d|307 309 329 330 d|319 329 338 339 d
336 338 346 347 d|345 350 351 357 d|337 339 351 352 u|331 335 340 342 u|322 335 343 345 d
337 342 350 352 d|347 350 358 364 d|335 339 358 368 u|334 339 342 347 d|338 342 343 347 d
320 322 343 346 u|303 307 322 336 u|292 296 308 315 u|287 291 297 300 u|283 285 291 293 u
275 283 286 288 u|277 279 284 286 u|262 268 280 281 u|267 268 274 277 d|270 275 294 295 d
293 294 307 308 d|293 302 307 308 u|292 297 302 314 u|268 283 297 298 u|271 272 282 283 u
269 272 274 278 d|273 274 275 276 d|273 275 277 279 d|270 278 279 281 d|268 274 282 290 u
264 271 275 279 u|257 263 271 273 u|255 257 263 268 u|253 257 269 273 d|260 262 267 270 u
259 263 275 276 d|268 271 275 276 u|257 259 272 274 u|257 259 279 280 d|263 272 280 293 u
253 258 272 282 u|203 205 252 260 u|197 198 205 207 u|193 197 198 203 u|192 197 207 208 d
201 205 207 217 d|202 207 210 216 d|207 209 210 212 d|207 209 210 212 d|207 209 210 214 d
205 209 210 212 d|191 195 209 213 u|190 193 195 198 u|188 190 193 195 u|188 190 192 193 d
188 190 193 194 u|184 188 192 196 u|181 188 190 197 d|185 186 191 193 u|203 205 211 218 u
203 205 207 209 d|201 203 207 208 u|187 188 203 207 u|178 181 188 192 u|166 167 181 188 u
163 166 168 169 d|165 166 168 169 d|160 163 169 170 u|154 156 163 164 u|137 138 157 158 u
133 135 139 141 u|131 132 137 139 u|131 132 137 138 d|133 134 135 137 d|131 133 137 140 u`
    .trim().split(/[|\n]/).map(row => row.split(' '));

const rsi = [544, 548, 567, 579, 584, 584, 598, 603, 609, 513, 525, 532, 543, 543, 526, 544, 542, 524, 525, 526,
    518, 527, 521, 527, 529, 540, 552, 544, 577, 580, 572, 563, 580, 597, 604, 610, 612, 589, 580, 587,
    594, 600, 564, 567, 567, 530, 510, 497, 491, 486, 483, 478, 466, 477, 512, 530, 523, 515, 496, 485,
    488, 490, 496, 497, 490, 485, 475, 466, 492, 484, 509, 504, 486, 521, 509, 492, 447, 443, 442, 457,
    458, 465, 466, 466, 468, 467, 451, 450, 447, 451, 452, 447, 457, 451, 499, 499, 495, 472, 463, 448,
    449, 450, 444, 438, 422, 420, 417, 431, 431, 428];

const averages = {
    '#5163c7': '83,230 90,231 97,235 104,240 111,248 118,254 124,254 135,257 150,259 165,259 180,260 192,261 200,265 208,272 216,276 224,285 233,297 246,308 257,318 263,321 270,321 280,314 290,308 298,302 305,300 313,299 320,295 330,290 340,287 350,283 357,281 373,277 386,273 400,253 413,242 427,233 437,223 453,212 470,208 480,202 497,188 510,173 522,166',
    '#6fae6c': '83,240 92,242 98,248 106,256 112,265 117,273 122,266 130,262 150,261 165,262 175,258 184,259 190,263 198,273 206,283 212,289 220,305 232,325 243,330 252,339 263,339 268,330 278,313 288,300 298,290 308,293 318,289 330,284 340,280 350,274 360,271 375,270 384,267 387,263 393,240 403,225 423,215 437,200 455,194 467,198 477,195 487,182 500,170 510,153 522,145',
    '#c4505c': '83,241 92,243 98,257 105,266 110,283 118,291 122,270 128,264 150,265 163,261 185,261 195,266 200,272 207,293 214,297 219,312 225,323 230,346 240,342 252,347 262,345 268,332 275,320 280,300 290,286 300,274 304,293 313,297 320,285 326,274 340,277 352,264 362,268 375,270 386,265 389,240 392,218 402,207 415,209 430,208 436,195 457,189 462,208 475,208 480,192 486,169 500,160 505,143'
};

const right = 925;
const out = [];
const line = (x1, y1, x2, y2, color, extra = '') =>
    out.push(`<line x1="${x1}" y1="${y1}" x2="${x2}" y2="${y2}" stroke="${color}" ${extra}/>`);
const rect = (x, y, w, h, color) =>
    out.push(`<rect x="${x}" y="${y}" width="${w}" height="${h}" fill="${color}"/>`);
const text = (x, y, str, size, color, extra = '') =>
    out.push(`<text x="${x}" y="${y}" font-size="${size}" fill="${color}" text-anchor="middle" ${extra}>${str}</text>`);
const barX = i => 85.3 + i * 4;

// watermark
text(504, 233, '/MNQ, 240', 56, '#d3d3d3');
text(504, 289, 'MNQM26', 56, '#d3d3d3');

// levels
line(83, 101.5, 903, 101.5, '#8a1414');
line(83, 119.5, right, 119.5, '#f3d9de');
line(83, 133.5, right, 133.5, '#6a70a8', 'stroke-dasharray="1 2"');
line(473, 135.5, right, 135.5, '#f6d3db');
line(506, 143.5, right, 143.5, '#d0304a');
line(494, 169, right, 169, '#ecb4be');
line(480, 190.5, right, 190.5, '#d0304a');
line(475, 206.5, right, 206.5, '#d0304a');

// rsi pane
rect(83, 453, right - 83, 136, '#f0ecf8');
line(83, 453.5, right, 453.5, '#b9b6c2', 'stroke-dasharray="5 4"');
line(83, 521.5, right, 521.5, '#8d87a0', 'stroke-dasharray="4 4"');
line(83, 589.5, right, 589.5, '#8d87a0', 'stroke-dasharray="4 4"');
line(83, 393, 970, 393, '#d5d5d5', 'stroke-width="2"');
const rsiPoints = rsi.map((y, i) => `${barX(i)},${y}`).join(' ');
out.push(`<polyline points="83,544 ${rsiPoints}" fill="none" stroke="#766192"/>`);

// candles
candles.forEach(([high, top, bottom, low, dir], i) => {
    const color = dir === 'u' ? '#2340b0' : '#0a0a0a';
    line(barX(i), high, barX(i), low, color, 'stroke-width="0.8"');
    rect(barX(i) - 1.5, top, 3, bottom - top, color);
});
Object.entries(averages).forEach(([color, points]) =>
    out.push(`<polyline points="${points}" fill="none" stroke="${color}" stroke-width="0.9"/>`));
[[125.5, 248], [205, 300], [285.5, 285], [365.5, 269], [445.5, 192]].forEach(([x, y]) =>
    out.push(`<circle cx="${x}" cy="${y}" r="2.3" fill="#fff" stroke="#5d78d8"/>`));

// news events
const events = [[246, 384], [270, 384], [290, 384], [294, 384], [314, 384], [338, 384], [358, 384], [410, 384],
    [426, 384], [450, 384], [454, 384], [498, 384], [502, 384], [546, 384], [290, 368], [338, 368], [498, 368],
    [546, 368], [290, 351], [338, 351]];
events.forEach(([x, y]) => out.push(`<circle cx="${x}" cy="${y}" r="6.3" fill="#fff" stroke="#b3b5a8" stroke-width="1.2"/>
    <path d="M${x + 1} ${y - 4}l-4 4.500h2.500l-1 3.500 4-4.500h-2.500z" fill="#dd6a50"/>`));

// crosshair
line(83, 358.5, right - 15, 358.5, '#999', 'stroke-dasharray="4 4"');
line(597.5, 102, 597.5, 634, '#999', 'stroke-dasharray="4 4"');
line(587, 357.5, 602, 357.5, '#000', 'stroke-width="1.3"');
line(594.5, 350, 594.5, 365, '#000', 'stroke-width="1.3"');

// price scale
[[24400, 258], [24000, 289], [23600, 320], [23200, 350], [22800, 381]].forEach(([v, y]) =>
    text(946, y + 3, v.toFixed(2), 8, '#a5a5a5'));
[[80, 419], [70, 453], [60, 487], [50, 521], [40, 555], [30, 589], [20, 623]].forEach(([v, y]) =>
    text(940, y + 3, v.toFixed(2), 8, '#a5a5a5'));
const tags = [['26277.25', 119, '#d81e45'], ['26020.50', 134, '#2350d8'], ['26003.71', 145, '#d81e45'],
    ['26003.25', 156, '#d81e45'], ['25888.25', 168, '#d81e45'], ['25868.54', 179, '#4caf50'],
    ['25601.11', 190, '#2350d8'], ['25558.00', 202, '#d81e45'], ['25287.50', 213, '#d81e45'],
    ['25079.50', 224, '#d81e45'], ['23099.50', 358, '#0f1114']];
tags.forEach(([label, y, color]) => {
    rect(right, y - 6, 42, 12, color);
    text(946, y + 3, label, 8, '#fff', 'font-weight="500"');
});
rect(right, 423, 29, 11, '#673ab7');
text(940, 431, '77.32', 8, '#fff', 'font-weight="500"');
rect(910, 352, 14, 12, '#0f1114');
out.push('<circle cx="917" cy="358" r="4.5" fill="none" stroke="#fff"/><path d="M917 355.500v5M914.500 358h5" stroke="#fff"/>');

// time scale
[['22', 109], ['25', 165], ['29', 229], ['Apr', 285], ['5', 341], ['8', 397], ['12', 461], ['15', 517],
    ['22', 637], ['26', 701], ['May', 805], ['6', 877]].forEach(([label, x]) =>
    text(x, 645, label, 8, '#a5a5a5', label.length > 2 ? 'font-weight="700"' : ''));
rect(561, 634, 73, 15, '#101216');
text(597, 645, '20 Apr \'26 &#160; 10:00', 8, '#fff', 'font-weight="500"');
out.push('<path d="M945.500 638.500h5l2.500 4-2.500 4h-5l-2.500-4z" fill="none" stroke="#333"/><circle cx="948" cy="642.500" r="1.500" fill="none" stroke="#333"/>');

document.getElementById('chart').innerHTML = out.join('');
```
